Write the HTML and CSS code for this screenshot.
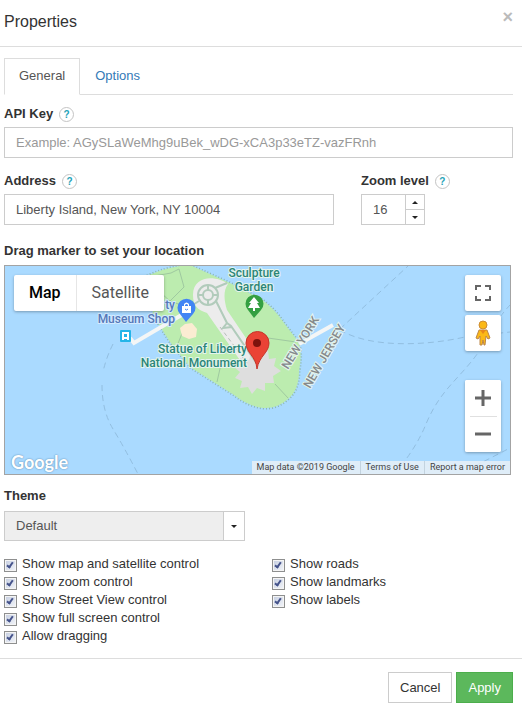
FILE: index.html
```html
<!DOCTYPE html>
<html lang="en">

<head>
    <meta charset="utf-8">
    <title>Properties</title>
    <link rel="stylesheet" href="styles.css">
</head>

<body>
    <form class="dialog">
        <div class="header">
            <h1>Properties</h1>
            <button type="button" class="close" aria-label="Close">×</button>
        </div>

        <div class="content">
            <div class="tabs">
                <a href="#general" class="tab active">General</a>
                <a href="#options" class="tab">Options</a>
            </div>

            <div class="field">
                <div class="caption">
                    <label for="key">API Key</label>
                    <button type="button" class="help" aria-label="Help">?</button>
                </div>
                <input type="text" id="key" class="text" placeholder="Example: AGySLaWeMhg9uBek_wDG-xCA3p33eTZ-vazFRnh">
            </div>

            <div class="row">
                <div class="field address">
                    <div class="caption">
                        <label for="address">Address</label>
                        <button type="button" class="help" aria-label="Help">?</button>
                    </div>
                    <input type="text" id="address" class="text" value="Liberty Island, New York, NY 10004">
                </div>
                <div class="field zoom">
                    <div class="caption">
                        <label for="zoom">Zoom level</label>
                        <button type="button" class="help" aria-label="Help">?</button>
                    </div>
                    <div class="spinner">
                        <input type="text" id="zoom" class="text" value="16">
                        <div class="steps">
                            <button type="button" aria-label="Increase"><i class="up"></i></button>
                            <button type="button" aria-label="Decrease"><i class="down"></i></button>
                        </div>
                    </div>
                </div>
            </div>

            <div class="field">
                <div class="caption">Drag marker to set your location</div>
                <div class="map">
                    <svg class="canvas" viewBox="0 0 505 208" preserveAspectRatio="xMidYMid slice">
                        <!-- ferry routes -->
                        <g class="route">
                            <path d="M108 78Q101 92 98 106M97 119Q97 145 108 163T133 208"/>
                            <path d="M335 63L403 0M335 64C365 82 420 80 460 71L505 66"/>
                            <path d="M396 200Q413 178 421 158C436 122 456 112 475 84Q490 55 505 39M470 200L505 182"/>
                        </g>
                        <!-- island -->
                        <path class="shore" d="M142 10Q160 2 175 0H187L225 17L256 33Q270 43 279 57L292 74Q298 84 294 105Q294 124 283 133Q272 143 258 142Q243 140 229 129L185 101L165 76L156 62L148 48Z"/>
                        <path class="island" d="M142 10Q160 2 175 0H187L225 17L256 33Q270 43 279 57L292 74Q298 84 294 105Q294 124 283 133Q272 143 258 142Q243 140 229 129L185 101L165 76L156 62L148 48Z"/>
                        <g class="paths">
                            <path d="M144 11L166 7L174 3L179 21L165 35M165 35L190 44M165 35L148 20M172 80L180 60M256 71L291 76M216 98L212 116M270 118L283 132"/>
                        </g>
                        <path class="pier" d="M125 72L129 77L180 47M294 78L328 59"/>
                        <path class="walk" d="M188 29C188 9 211 9 223 18C218 25 219 34 222 44L257 96L239 100L202 47C193 44 188 40 188 29Z"/>
                        <path class="statue" d="M252 80L256 87L263 84L264 93L271 92L269 100L276 105L268 110L269 117L260 117L260 125L252 122L247 128L243 121L235 122L237 115L230 112L235 106L229 101L237 99L235 92L244 94L246 86Z"/>
                        <g class="plaza">
                            <circle cx="203" cy="29" r="10"/>
                            <circle cx="203" cy="29" r="5"/>
                            <path d="M203 34V39M203 24V19M198 29H193M208 29H213M211 35L222 57L226 60L252 98M222 57L218 62L227 61M210 22L222 17M194 35L183 42"/>
                        </g>
                        <path class="steps-line" d="M215 61L242 97"/>
                        <path class="shop" d="M175 62L180 58L187 57L192 63L191 71L184 73L177 70Z"/>
                        <!-- ferry stop -->
                        <rect x="115" y="64" width="11" height="12" rx="1" fill="#25b5e8"/>
                        <path d="M117 66H124V74H117Z" fill="#fff"/>
                        <path d="M119 68H122V71H119ZM119 73H122V74H119Z" fill="#25b5e8"/>
                        <!-- shop pin -->
                        <path d="M181 56L175 48A9 9 0 1 1 188 48Z" fill="#4285f4"/>
                        <path d="M177 40H186V47H177ZM179 40V38Q181.500 35 184 38V40" fill="#fff"/>
                        <path d="M180 40V39Q181.500 37 183 39V40Z" fill="#4285f4"/>
                        <path d="M180 43Q181.500 45 183 43" fill="none" stroke="#4285f4"/>
                        <!-- garden pin -->
                        <path d="M249 52L243 44A9 9 0 1 1 256 44Z" fill="#34a042"/>
                        <path d="M249 31L254 37H252L255 42H250V45H248V42H243L246 37H244Z" fill="#fff"/>
                        <g class="labels">
                            <text class="blue" x="170" y="43" text-anchor="end">ty</text>
                            <text class="blue" x="170" y="57" text-anchor="end">Museum Shop</text>
                            <text x="249" y="11" text-anchor="middle">Sculpture</text>
                            <text x="249" y="25" text-anchor="middle">Garden</text>
                            <text x="242" y="87" text-anchor="end">Statue of Liberty</text>
                            <text x="242" y="101" text-anchor="end">National Monument</text>
                            <text class="state" transform="translate(283 104) rotate(-58)">NEW YORK</text>
                            <text class="state" transform="translate(305 123) rotate(-60)">NEW JERSEY</text>
                        </g>
                        <!-- marker -->
                        <path d="M252 103C251 90 241 87 241 77A11.500 11.500 0 0 1 264 77C264 87 254 90 252 103Z" fill="#ea4335" stroke="#c5352a"/>
                        <circle cx="252" cy="77" r="4" fill="#7d130d"/>
                    </svg>

                    <div class="types">
                        <button type="button" class="on">Map</button>
                        <button type="button">Satellite</button>
                    </div>

                    <div class="tools">
                        <button type="button" aria-label="Full screen">
                            <svg width="16" height="16" viewBox="0 0 16 16"><path d="M1 5V1H6M10 1H15V5M15 11V15H10M6 15H1V11" fill="none" stroke="#666" stroke-width="2"/></svg>
                        </button>
                        <button type="button" aria-label="Street View">
                            <svg width="16" height="26" viewBox="0 0 16 26">
                                <path d="M4 10H12L15 18L13 19L11 16L10 25H9L8 20L7 25H5L5 16L3 19L1 18Z" fill="#fbb917" stroke="#bd8748"/>
                                <path d="M5 10L8 14L11 10Z" fill="#e8891c"/>
                                <circle cx="8" cy="5" r="4" fill="#fbb917" stroke="#cd8d34"/>
                            </svg>
                        </button>
                        <div class="zoomer">
                            <button type="button" aria-label="Zoom in">
                                <svg width="16" height="16" viewBox="0 0 16 16"><path d="M0 8H16M8 0V16" stroke="#666" stroke-width="3"/></svg>
                            </button>
                            <button type="button" aria-label="Zoom out">
                                <svg width="16" height="16" viewBox="0 0 16 16"><path d="M0 8H16" stroke="#666" stroke-width="3"/></svg>
                            </button>
                        </div>
                    </div>

                    <span class="brand">Google</span>
                    <div class="credits">
                        <span>Map data ©2019 Google</span>
                        <a href="#terms">Terms of Use</a>
                        <a href="#report">Report a map error</a>
                    </div>
                </div>
            </div>

            <div class="field">
                <div class="caption"><label for="theme">Theme</label></div>
                <div class="select">
                    <select id="theme">
                        <option>Default</option>
                    </select>
                </div>
            </div>

            <div class="checks">
                <div>
                    <label><input type="checkbox" checked>Show map and satellite control</label>
                    <label><input type="checkbox" checked>Show zoom control</label>
                    <label><input type="checkbox" checked>Show Street View control</label>
                    <label><input type="checkbox" checked>Show full screen control</label>
                    <label><input type="checkbox" checked>Allow dragging</label>
                </div>
                <div>
                    <label><input type="checkbox" checked>Show roads</label>
                    <label><input type="checkbox" checked>Show landmarks</label>
                    <label><input type="checkbox" checked>Show labels</label>
                </div>
            </div>
        </div>

        <div class="footer">
            <button type="button" class="btn">Cancel</button>
            <button type="submit" class="btn apply">Apply</button>
        </div>
    </form>
</body>

</html>
```

FILE: styles.css
```css
* {
    box-sizing: border-box;
    margin: 0;
    padding: 0;
}

body {
    background: #fff;
    color: #333;
    font: 13px/18px "Liberation Sans", Arial, sans-serif;
}

button,
input,
select {
    font: inherit;
    color: inherit;
    border-radius: 0;
}

button {
    border: 0;
    background: none;
    cursor: pointer;
}

a {
    color: #337ab7;
    text-decoration: none;
}

.header {
    display: flex;
    justify-content: space-between;
    align-items: flex-start;
    height: 47px;
    padding: 8px 9px 0 4px;
    border-bottom: 1px solid #ddd;
}

.header h1 {
    font-size: 16px;
    font-weight: 400;
    line-height: 28px;
}

.close {
    color: #bbb;
    font-size: 18px;
    font-weight: 700;
    line-height: 18px;
}

.content {
    padding: 11px 9px 13px 4px;
}

.tabs {
    display: flex;
    height: 37px;
    margin-bottom: 10px;
    border-bottom: 1px solid #ddd;
}

.tab {
    height: 37px;
    padding: 0 14px;
    border: 1px solid transparent;
    line-height: 34px;
}

.tab.active {
    color: #555;
    background: #fff;
    border-color: #ddd;
    border-bottom-color: #fff;
}

.caption {
    display: flex;
    align-items: flex-start;
    height: 22px;
    font-weight: 700;
}

.help {
    width: 15px;
    height: 15px;
    margin: 2px 0 0 6px;
    border: 1px solid #c4c4c4;
    border-radius: 50%;
    color: #1fa3b8;
    font-size: 10px;
    font-weight: 700;
    line-height: 13px;
    text-align: center;
}

.text {
    display: block;
    width: 100%;
    height: 31px;
    padding: 0 11px;
    border: 1px solid #ccc;
    background: #fff;
    color: #555;
}

.text::placeholder {
    color: #999;
}

.row {
    display: flex;
    gap: 27px;
    margin: 14px 0 17px;
}

.address {
    flex: 0 1 330px;
}

.spinner {
    display: flex;
    width: 64px;
}

.spinner .text {
    flex: 1;
    min-width: 0;
}

.steps {
    display: flex;
    flex-direction: column;
    width: 19px;
    border: solid #ccc;
    border-width: 1px 1px 1px 0;
}

.steps button {
    display: flex;
    flex: 1;
    align-items: center;
    justify-content: center;
}

.steps button + button {
    border-top: 1px solid #ccc;
}

.up,
.down {
    border: 3px solid transparent;
}

.up {
    border-top: 0;
    border-bottom-color: #222;
}

.down {
    border-bottom: 0;
    border-top-color: #222;
}

.map {
    position: relative;
    height: 210px;
    margin: 1px 2px 12px 0;
    border: 1px solid #a3a3a3;
    background: #aadaff;
    font-family: Roboto, sans-serif;
    overflow: hidden;
}

.canvas {
    display: block;
    width: 100%;
    height: 100%;
}

.route {
    fill: none;
    stroke: #92bee0;
    stroke-dasharray: 6 4;
}

.shore {
    fill: none;
    stroke: #8cb8ae;
    stroke-width: 3;
    stroke-dasharray: 1 2;
}

.island {
    fill: #bcecaf;
}

.paths {
    fill: none;
    stroke: #9fc9a0;
}

.pier {
    fill: none;
    stroke: #f4f6f6;
    stroke-width: 4;
}

.walk {
    fill: #ececec;
}

.statue {
    fill: #dedede;
}

.plaza {
    fill: none;
    stroke: #b1cbbb;
    stroke-width: 2;
}

.steps-line {
    stroke: #b5bdb9;
    stroke-dasharray: 4 3;
}

.shop {
    fill: #fbecd2;
}

.labels {
    fill: #2b8577;
    stroke: #e4f4ee;
    stroke-width: 2px;
    paint-order: stroke;
    font-size: 12px;
    font-weight: 500;
}

.labels .blue {
    fill: #5578b8;
    stroke: #d3eaff;
}

.labels .state {
    fill: #85898c;
}

.types,
.tools,
.credits,
.brand {
    position: absolute;
}

.types {
    top: 9px;
    left: 9px;
    display: flex;
    background: #fff;
    border-radius: 2px;
    box-shadow: 0 1px 3px rgba(0, 0, 0, .3);
}

.types button {
    height: 36px;
    padding: 0 15px;
    color: #565656;
    font-size: 16px;
}

.types .on {
    color: #000;
    font-weight: 500;
    border-right: 1px solid #e6e6e6;
}

.tools {
    top: 9px;
    right: 9px;
    display: grid;
    gap: 4px;
}

.tools button {
    display: flex;
    align-items: center;
    justify-content: center;
    width: 36px;
    height: 36px;
    background: #fff;
    border-radius: 2px;
    box-shadow: 0 1px 3px rgba(0, 0, 0, .3);
}

.zoomer {
    margin-top: 25px;
    background: #fff;
    border-radius: 2px;
    box-shadow: 0 1px 3px rgba(0, 0, 0, .3);
}

.zoomer button {
    box-shadow: none;
}

.zoomer button + button {
    background: linear-gradient(#e0e0e0, #e0e0e0) center top / 27px 1px no-repeat #fff;
}

.brand {
    left: 6px;
    bottom: 1px;
    color: #fff;
    font: 700 18px/22px Lato, sans-serif;
    text-shadow: 0 0 2px #6d9cc0, 0 0 1px #6d9cc0;
}

.credits {
    right: 0;
    bottom: 0;
    display: flex;
    background: rgba(245, 245, 245, .7);
    color: #444;
    font-size: 9px;
    line-height: 13px;
}

.credits span,
.credits a {
    padding: 0 5px;
    color: #444;
}

.credits a {
    border-left: 1px solid #c3d3df;
}

.select {
    position: relative;
    width: 241px;
    margin-top: 2px;
}

.select select {
    display: block;
    width: 100%;
    height: 30px;
    padding: 0 32px 0 11px;
    border: 1px solid #ccc;
    appearance: none;
    background: linear-gradient(#ccc, #ccc) right 20px top / 1px 100% no-repeat, linear-gradient(#fff, #fff) right / 20px 100% no-repeat #eee;
    color: #555;
}

.select::after {
    content: "";
    position: absolute;
    top: 14px;
    right: 8px;
    border: 3px solid transparent;
    border-top-color: #222;
    border-bottom: 0;
    pointer-events: none;
}

.checks {
    display: grid;
    grid-template-columns: 268px 1fr;
    margin-top: 14px;
}

.checks label {
    display: flex;
    align-items: center;
    height: 18px;
}

.checks input {
    position: relative;
    width: 13px;
    height: 13px;
    margin: 2px 5px 0 0;
    appearance: none;
    border: 1px solid #8e8f8f;
    background: linear-gradient(135deg, #c4cde0, #f4f6fa);
    box-shadow: inset 0 0 0 1px #f4f4f4;
}

.checks input:checked::after {
    content: "";
    position: absolute;
    top: 1px;
    left: 3px;
    width: 2px;
    height: 5px;
    border: solid #45538b;
    border-width: 0 2px 2px 0;
    transform: rotate(35deg);
}

.footer {
    display: flex;
    justify-content: flex-end;
    gap: 4px;
    padding: 13px 9px 10px;
    border-top: 1px solid #ddd;
}

.btn {
    height: 31px;
    padding: 0 11px;
    border: 1px solid #ccc;
    background: #fff;
}

.apply {
    border-color: #4cae4c;
    background: #5cb85c;
    color: #fff;
}
```
